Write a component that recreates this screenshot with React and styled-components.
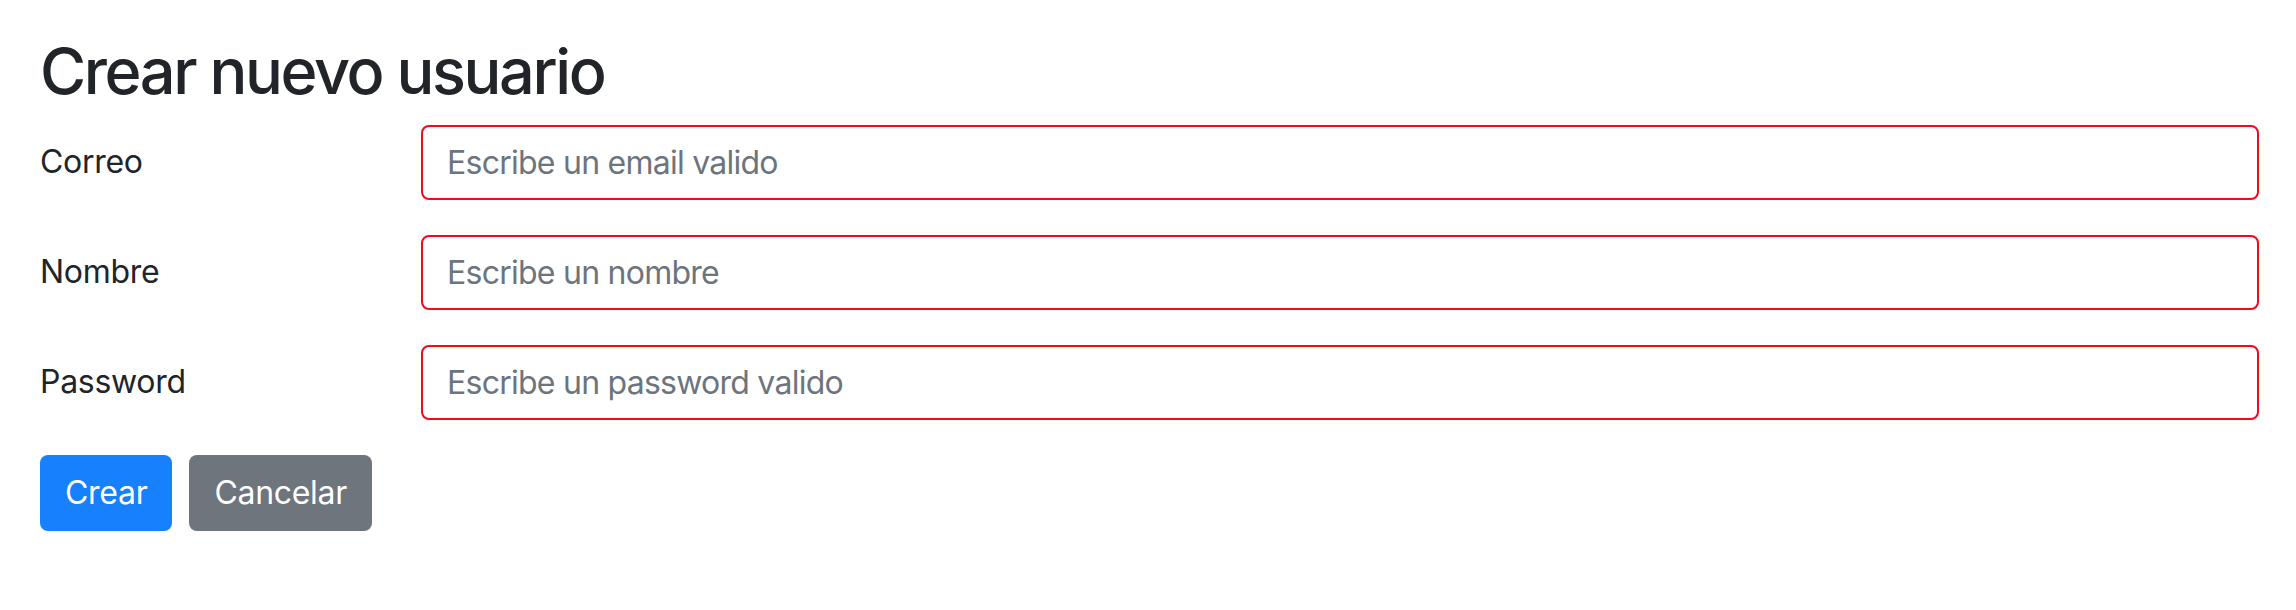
import React from "react";
import styled, { createGlobalStyle } from "styled-components";

const Global = createGlobalStyle`
  html, body { margin: 0; padding: 0; background: #fff; }
  body { font-family: Inter, "Noto Sans", sans-serif; color: #212529; }
  * { box-sizing: border-box; }
`;

const Page = styled.div`
  padding: 33px 37px 40px 40px;
`;

const Title = styled.h2`
  margin: 0 0 15px;
  font-size: 63px;
  line-height: 76.8px;
  font-weight: 500;
  letter-spacing: -2.4px;
  color: #212529;
`;

const Form = styled.form`
  display: flex;
  flex-direction: column;
  gap: 35px;
`;

const Row = styled.div`
  display: grid;
  grid-template-columns: 381px 1fr;
  align-items: center;
`;

const Label = styled.label`
  font-size: 32px;
  line-height: 48px;
  letter-spacing: -0.3px;
  color: #212529;
`;

const Input = styled.input`
  height: 75px;
  width: 100%;
  border: 2px solid #f20a1c;
  border-radius: 8px;
  padding: 0 24px;
  font-family: inherit;
  font-size: 32px;
  letter-spacing: -0.75px;
  color: #495057;
  outline: none;
  &::placeholder { color: #6c757d; opacity: 1; }
`;

const Actions = styled.div`
  display: flex;
  gap: 17px;
`;

const Button = styled.button`
  height: 76px;
  padding: 0 25px;
  border: none;
  border-radius: 8px;
  font-family: inherit;
  font-size: 32px;
  letter-spacing: -0.3px;
  color: #fff;
  background: ${(p) => (p.$variant === "secondary" ? "#6e757c" : "#1780fc")};
  cursor: pointer;
`;

export default function App() {
  return (
    <>
      <Global />
      <Page>
        <Title>Crear nuevo usuario</Title>
        <Form onSubmit={(e) => e.preventDefault()}>
          <Row>
            <Label>Correo</Label>
            <Input type="email" placeholder="Escribe un email valido" />
          </Row>
          <Row>
            <Label>Nombre</Label>
            <Input type="text" placeholder="Escribe un nombre" />
          </Row>
          <Row>
            <Label>Password</Label>
            <Input type="password" placeholder="Escribe un password valido" />
          </Row>
          <Actions>
            <Button type="submit">Crear</Button>
            <Button type="button" $variant="secondary">Cancelar</Button>
          </Actions>
        </Form>
      </Page>
    </>
  );
}
